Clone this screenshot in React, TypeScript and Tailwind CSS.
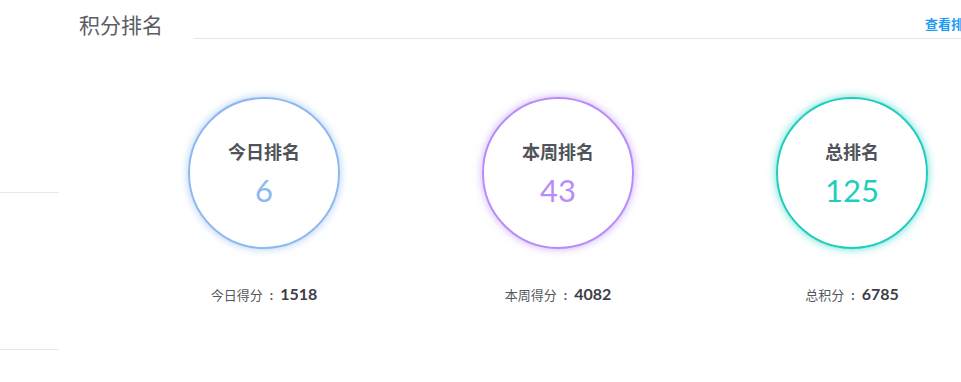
import React from "react";

const items = [
  { title: "今日排名", value: "6", label: "今日得分", score: "1518", color: "#8db8f0", glow: "rgba(141,184,240,0.7)" },
  { title: "本周排名", value: "43", label: "本周得分", score: "4082", color: "#b88cf8", glow: "rgba(184,140,248,0.7)" },
  { title: "总排名", value: "125", label: "总积分", score: "6785", color: "#1fcdbf", glow: "rgba(31,205,191,0.7)" },
];

export default function App() {
  return (
    <div
      className="w-[961px] h-[382px] bg-white overflow-hidden flex"
      style={{ fontFamily: 'Lato, "Noto Sans CJK SC", sans-serif' }}
    >
      <div className="w-[59px] shrink-0 flex flex-col">
        <div className="h-[192px]" />
        <div className="h-px bg-[#e8e8e8]" />
        <div className="h-[156px]" />
        <div className="h-px bg-[#e8e8e8]" />
      </div>
      <div className="flex-1 flex flex-col min-w-0">
        <div className="flex items-end h-[39px] relative">
          <div className="w-[135px] shrink-0 pl-[20px] pb-[0px] text-[21px] leading-[28px] text-[#5a5d63]">积分排名</div>
          <div className="flex-1 h-full border-b border-[#e6e6e6] flex justify-end items-start pt-[15px] overflow-hidden">
            <span className="text-[13px] leading-[18px] font-semibold text-[#1d9bf5] whitespace-nowrap -mr-[16px]">查看排行</span>
          </div>
        </div>
        <div className="flex pl-[129px] gap-[142px] pt-[58px]">
          {items.map((it) => (
            <div key={it.title} className="flex flex-col items-center w-[152px] shrink-0">
              <div
                className="w-[152px] h-[152px] rounded-full border-2 flex flex-col items-center"
                style={{ borderColor: it.color, boxShadow: `0 0 8px ${it.glow}` }}
              >
                <div className="mt-[40px] text-[18px] leading-[26px] font-bold text-[#50535a]">{it.title}</div>
                <div className="mt-[5px] text-[31px] leading-[40px]" style={{ color: it.color }}>{it.value}</div>
              </div>
              <div className="mt-[33px] flex items-baseline whitespace-nowrap">
                <span className="text-[13px] text-[#55585e]">{it.label}</span>
                <span className="text-[13px] font-bold text-[#55585e] px-[7px]">:</span>
                <span className="text-[16px] font-bold text-[#3d4048]">{it.score}</span>
              </div>
            </div>
          ))}
        </div>
      </div>
    </div>
  );
}
